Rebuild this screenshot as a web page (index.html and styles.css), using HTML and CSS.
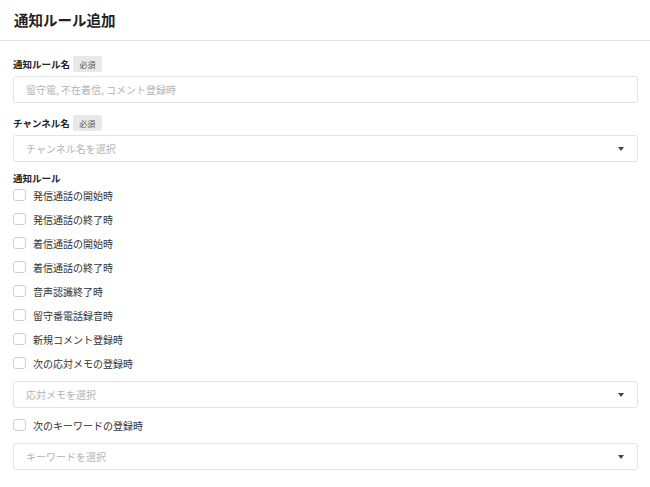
FILE: index.html
```html
<!DOCTYPE html>
<html lang="ja">
<head>
    <meta charset="UTF-8">
    <title>通知ルール追加</title>
    <link rel="stylesheet" href="styles.css">
</head>
<body>
<header class="page-header">
    <h1>通知ルール追加</h1>
</header>

<form class="rule-form">
    <!-- ルール名 -->
    <div class="field">
        <div class="field-label">通知ルール名 <span class="badge">必須</span></div>
        <input class="text-input" type="text" placeholder="留守電, 不在着信, コメント登録時">
    </div>

    <!-- チャンネル -->
    <div class="field channel">
        <div class="field-label">チャンネル名 <span class="badge">必須</span></div>
        <div class="select">チャンネル名を選択<span class="caret"></span></div>
    </div>

    <!-- ルール -->
    <div class="field rules">
        <div class="field-label plain">通知ルール</div>
        <label class="check"><span class="box"></span>発信通話の開始時</label>
        <label class="check"><span class="box"></span>発信通話の終了時</label>
        <label class="check"><span class="box"></span>着信通話の開始時</label>
        <label class="check"><span class="box"></span>着信通話の終了時</label>
        <label class="check"><span class="box"></span>音声認識終了時</label>
        <label class="check"><span class="box"></span>留守番電話録音時</label>
        <label class="check"><span class="box"></span>新規コメント登録時</label>
        <label class="check"><span class="box"></span>次の応対メモの登録時</label>
        <div class="select sub">応対メモを選択<span class="caret"></span></div>
        <label class="check"><span class="box"></span>次のキーワードの登録時</label>
        <div class="select sub">キーワードを選択<span class="caret"></span></div>
    </div>
</form>
</body>
</html>
```

FILE: styles.css
```css
* { box-sizing: border-box; }
body {
  margin: 0;
  font-family: "Noto Sans CJK JP", "Noto Sans", sans-serif;
  background: #fff;
  color: #333;
}
.page-header {
  height: 41px;
  padding: 0 14px;
  border-bottom: 1px solid #e2e2e2;
  display: flex;
  align-items: center;
}
.page-header h1 {
  margin: 0 0 2px;
  font-size: 14.5px;
  font-weight: bold;
  color: #222;
}
/* form body */
.rule-form {
  padding: 15px 12px 0 13px;
}
.field { margin-bottom: 12px; }
.field.channel { margin-bottom: 10px; }
.field-label {
  display: flex;
  align-items: center;
  gap: 3px;
  height: 16px;
  font-size: 9.5px;
  font-weight: bold;
  color: #222;
  margin-bottom: 4px;
}
.field-label.plain {
  height: 12px;
  margin-bottom: 0;
}
.badge {
  display: inline-flex;
  align-items: center;
  justify-content: center;
  width: 29px;
  height: 16px;
  border-radius: 2px;
  background: #e8e8e8;
  color: #555;
  font-size: 8px;
  font-weight: normal;
}
.text-input,
.select {
  display: flex;
  align-items: center;
  width: 100%;
  height: 27px;
  padding: 0 12px;
  border: 1px solid #e3e3e3;
  border-radius: 3px;
  font-family: inherit;
  font-size: 10px;
  color: #333;
  background: #fff;
}
.text-input::placeholder { color: #b4b4b4; }
.select {
  justify-content: space-between;
  color: #b4b4b4;
}
.select.sub { margin: 6px 0 5px; }
.caret {
  width: 0;
  height: 0;
  border-left: 3px solid transparent;
  border-right: 3px solid transparent;
  border-top: 4px solid #444;
  margin-right: 1px;
}
.check {
  display: flex;
  align-items: center;
  height: 24px;
  font-size: 10px;
  color: #333;
}
.rules .field-label + .check { margin-top: -1px; }
.box {
  width: 13px;
  height: 12px;
  border: 1px solid #cfcfcf;
  border-radius: 3px;
  margin-right: 7px;
  background: #fff;
}
```
